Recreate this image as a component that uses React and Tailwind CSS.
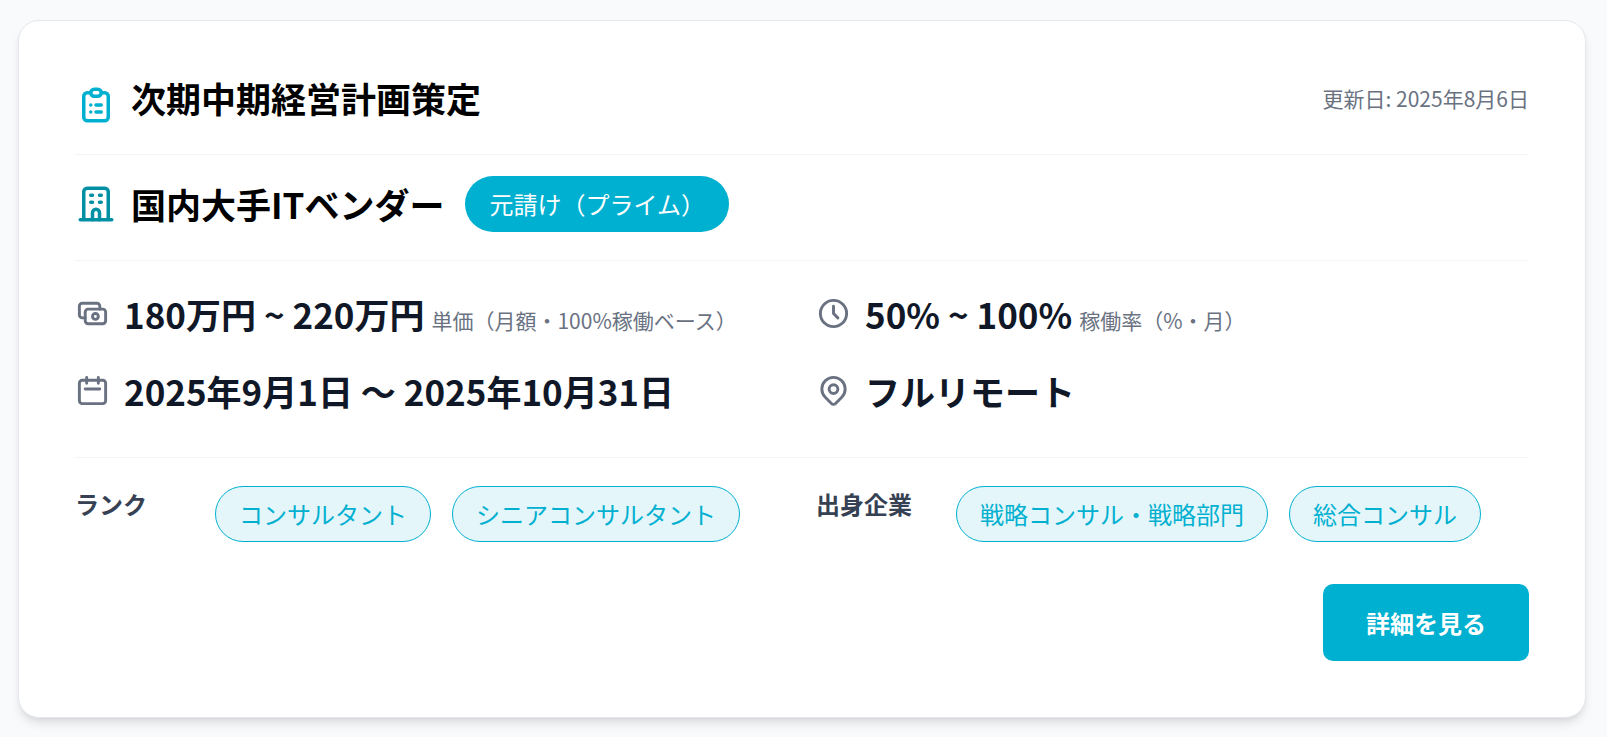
import React from 'react';

const ranks = ['コンサルタント', 'シニアコンサルタント'];
const backgrounds = ['戦略コンサル・戦略部門', '総合コンサル'];

function Icon({ className, children }) {
  return (
    <svg
      viewBox="0 0 24 24"
      fill="none"
      stroke="currentColor"
      strokeWidth="2"
      strokeLinecap="round"
      strokeLinejoin="round"
      aria-hidden="true"
      className={className}
    >
      {children}
    </svg>
  );
}

function Metric({ icon, value, note }) {
  return (
    <div className="flex items-start gap-3.5">
      <Icon className="mt-[7px] size-[35px] shrink-0 text-gray-500">{icon}</Icon>
      <p className="text-[35px] leading-[49px] font-semibold text-gray-900">
        {value}
        {note && <span className="ml-[7px] text-[21px] leading-none font-normal text-gray-500">{note}</span>}
      </p>
    </div>
  );
}

function TagGroup({ label, tags }) {
  return (
    <div className="flex items-start">
      <h3 className="w-[140px] shrink-0 text-2xl leading-9 font-semibold text-gray-700">{label}</h3>
      <ul className="flex flex-wrap gap-[21px]">
        {tags.map((tag) => (
          <li
            key={tag}
            className="flex h-14 items-center rounded-full border border-[#00b0d0] bg-[#e5f6fa] px-[23px] text-2xl text-[#00b0d0]"
          >
            {tag}
          </li>
        ))}
      </ul>
    </div>
  );
}

export default function App() {
  return (
    <main
      lang="ja"
      className="min-h-screen bg-[#f8fafc] pt-5 pr-[21px] pl-[18px] font-['Noto_Sans_CJK_JP',sans-serif]"
    >
      <article className="rounded-[21px] border border-gray-200 bg-white p-14 shadow-[0_7px_11px_-2px_rgba(0,0,0,0.1),0_4px_7px_-4px_rgba(0,0,0,0.1)]">
        {/* Project title */}
        <header className="flex items-start justify-between border-b border-gray-100 pb-7">
          <div className="flex items-start gap-3.5">
            <Icon className="mt-[7px] size-[42px] shrink-0 text-[#00b0d0]">
              <path d="M9 5H7a2 2 0 0 0-2 2v12a2 2 0 0 0 2 2h10a2 2 0 0 0 2-2V7a2 2 0 0 0-2-2h-2" />
              <rect x="9" y="3" width="6" height="4" rx="2" />
              <path d="M9 12h.01M12 12h3M9 16h.01M12 16h3" />
            </Icon>
            <h1 className="text-[35px] leading-[42px] font-bold text-black">次期中期経営計画策定</h1>
          </div>
          <p className="text-[21px] leading-[42px] text-gray-500">更新日: 2025年8月6日</p>
        </header>

        {/* Client */}
        <section className="flex items-center border-b border-gray-100 pt-[21px] pb-7">
          <Icon className="mr-3.5 size-[42px] shrink-0 text-[#008fa3]">
            <path d="M3 21h18M5 21V5a2 2 0 0 1 2-2h10a2 2 0 0 1 2 2v16" />
            <path d="M10 21v-4a2 2 0 0 1 4 0v4M9 7h1M14 7h1M9 11h1M14 11h1" />
          </Icon>
          <h2 className="mr-[21px] text-[35px] leading-[42px] font-bold text-black">国内大手ITベンダー</h2>
          <span className="flex h-14 items-center rounded-full bg-[#00b0d0] px-6 text-2xl text-white">
            元請け（プライム）
          </span>
        </section>

        {/* Conditions */}
        <section className="grid grid-cols-2 gap-7 border-b border-gray-100 pt-7 pb-[42px]">
          <Metric
            value="180万円 ~ 220万円"
            note="単価（月額・100%稼働ベース）"
            icon={
              <>
                <rect x="7" y="9" width="14" height="10" rx="2" />
                <circle cx="14" cy="14" r="2" />
                <path d="M17 9V7a2 2 0 0 0-2-2H5a2 2 0 0 0-2 2v6a2 2 0 0 0 2 2h2" />
              </>
            }
          />
          <Metric
            value="50% ~ 100%"
            note="稼働率（%・月）"
            icon={
              <>
                <circle cx="12" cy="12" r="9" />
                <path d="M12 7v5l3 3" />
              </>
            }
          />
          <Metric
            value="2025年9月1日 〜 2025年10月31日"
            icon={
              <>
                <rect x="3" y="5" width="18" height="16" rx="2" />
                <path d="M8 3v4M16 3v4M7 11h10" />
              </>
            }
          />
          <Metric
            value="フルリモート"
            icon={
              <>
                <circle cx="12" cy="11" r="3" />
                <path d="M17.657 16.657L13.414 20.9a2 2 0 0 1-2.827 0l-4.244-4.243a8 8 0 1 1 11.314 0z" />
              </>
            }
          />
        </section>

        {/* Rank and background */}
        <section className="grid grid-cols-2 gap-7 pt-7">
          <TagGroup label="ランク" tags={ranks} />
          <TagGroup label="出身企業" tags={backgrounds} />
        </section>

        <div className="mt-[42px] flex justify-end">
          <button
            type="button"
            className="h-[77px] cursor-pointer rounded-[10px] bg-[#00b0d0] px-[43px] text-2xl font-semibold text-white"
          >
            詳細を見る
          </button>
        </div>
      </article>
    </main>
  );
}
